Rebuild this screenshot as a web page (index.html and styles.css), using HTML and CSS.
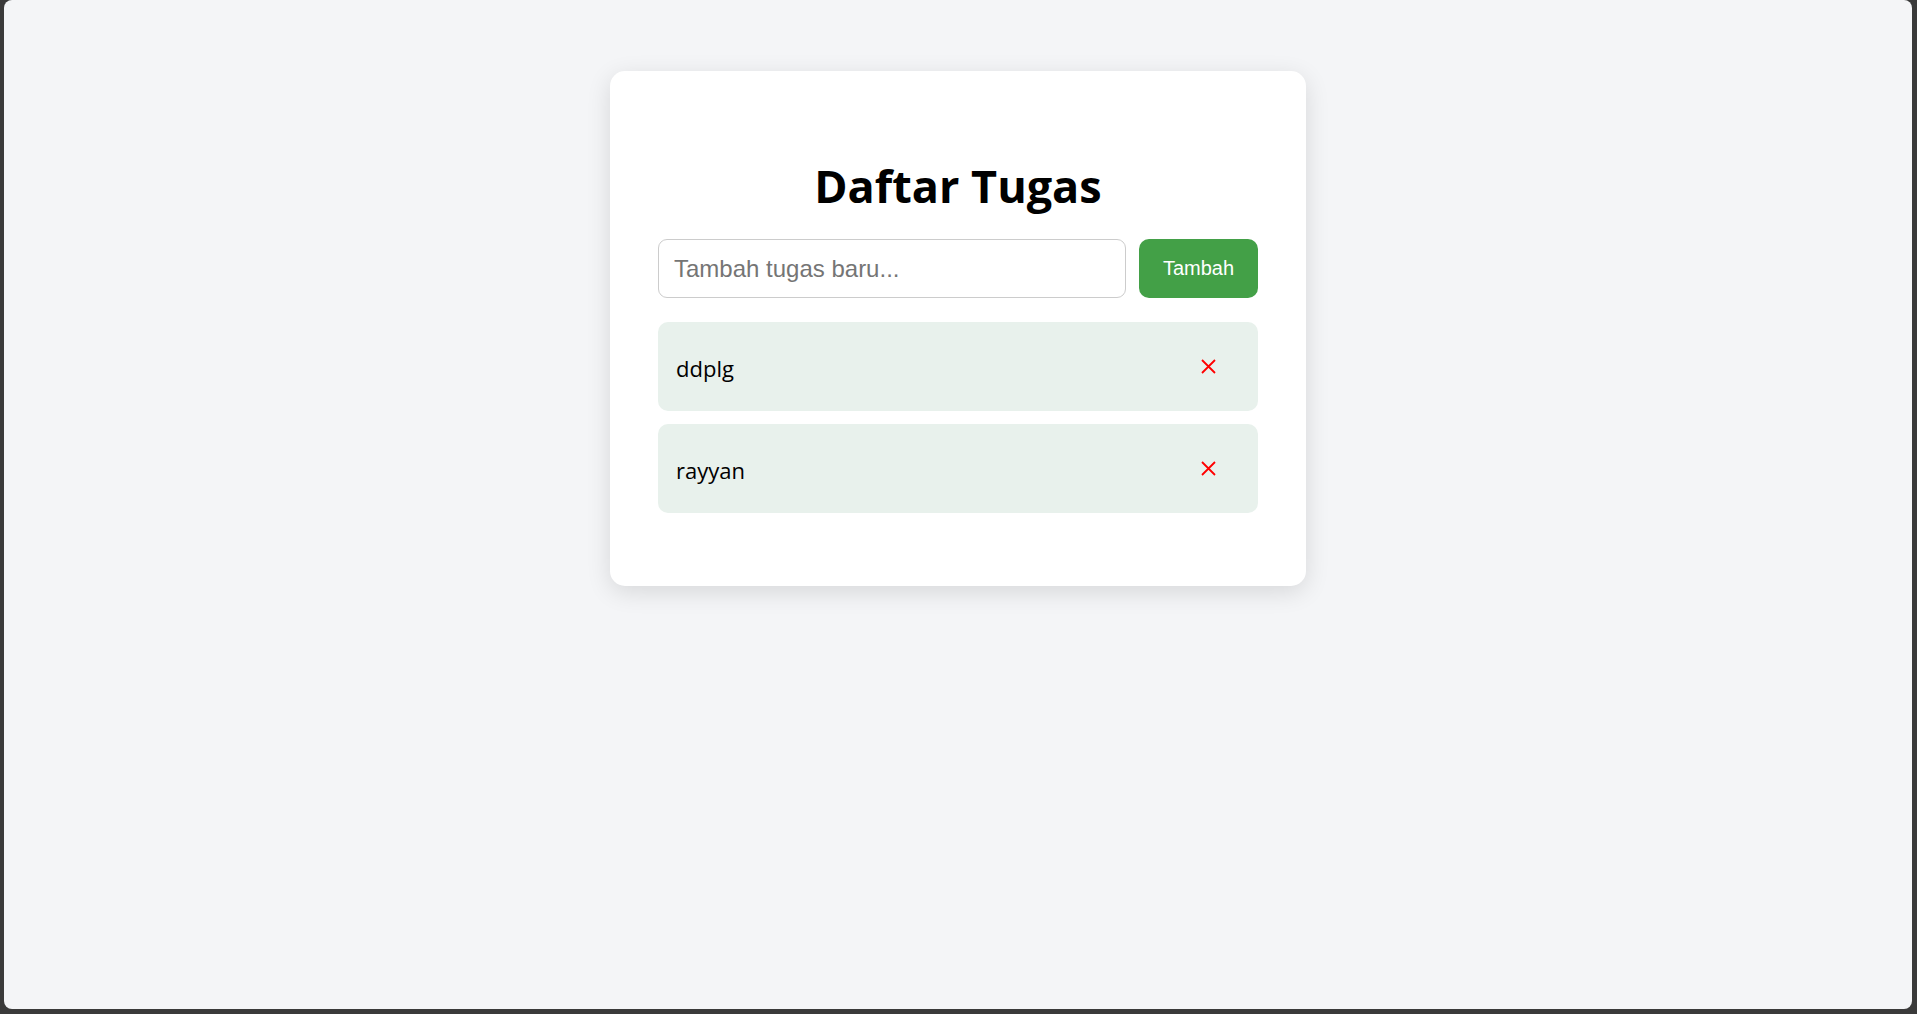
FILE: index.html
```html
<!DOCTYPE html>
<html lang="id">
<head>
<meta charset="utf-8">
<title>Daftar Tugas</title>
<link rel="stylesheet" href="styles.css">
</head>
<body>
<div class="screen">
  <main class="card">
    <h1 class="title">Daftar Tugas</h1>
    <form class="add-form">
      <input class="task-input" type="text" placeholder="Tambah tugas baru...">
      <button class="add-btn" type="button">Tambah</button>
    </form>
    <ul class="task-list">
      <li class="task">
        <span class="task-text">ddplg</span>
        <button class="del-btn" type="button" aria-label="Hapus">
          <svg width="15" height="15" viewBox="0 0 15 15"><path d="M1 1L14 14M14 1L1 14" stroke="#ff0000" stroke-width="1.8" fill="none"/></svg>
        </button>
      </li>
      <li class="task">
        <span class="task-text">rayyan</span>
        <button class="del-btn" type="button" aria-label="Hapus">
          <svg width="15" height="15" viewBox="0 0 15 15"><path d="M1 1L14 14M14 1L1 14" stroke="#ff0000" stroke-width="1.8" fill="none"/></svg>
        </button>
      </li>
    </ul>
  </main>
</div>
</body>
</html>
```

FILE: styles.css
```css
html, body {
  margin: 0;
  padding: 0;
  background: #3a3a3a;
  height: 100%;
}

body {
  font-family: "Open Sans", "Noto Sans", sans-serif;
  color: #000;
}

.screen {
  box-sizing: border-box;
  height: 1009px;
  margin: 0 5px 0 4px;
  background: #f4f5f7;
  border-radius: 8px;
  padding-top: 71px;
  display: flex;
  flex-direction: column;
  align-items: center;
}

.card {
  box-sizing: border-box;
  width: 696px;
  background: #ffffff;
  border-radius: 15px;
  padding: 48px 48px 48px;
  box-shadow: 0 6px 24px rgba(0, 0, 0, 0.12);
}

.title {
  margin: 40px 0 26px;
  font-size: 45px;
  line-height: 54px;
  font-weight: 700;
  text-align: center;
}

.add-form {
  display: flex;
  gap: 13px;
  margin: 0;
}

.task-input {
  flex: 1;
  box-sizing: border-box;
  height: 59px;
  padding: 0 15px;
  border: 1px solid #cccccc;
  border-radius: 9px;
  font-family: "Liberation Sans", Arial, sans-serif;
  font-size: 24px;
  color: #333;
  outline: none;
}

.task-input::placeholder {
  color: #757575;
}

.add-btn {
  box-sizing: border-box;
  width: 119px;
  height: 59px;
  border: none;
  border-radius: 10px;
  background: #43a047;
  color: #ffffff;
  font-family: "Liberation Sans", Arial, sans-serif;
  font-size: 20px;
  padding: 0;
}

.task-list {
  list-style: none;
  margin: 24px 0 25px;
  padding: 0;
  display: flex;
  flex-direction: column;
  gap: 13px;
}

.task {
  box-sizing: border-box;
  height: 89px;
  display: flex;
  align-items: center;
  justify-content: space-between;
  padding: 0 42px 0 18px;
  background: #e8f1ec;
  border-radius: 10px;
}

.task-text {
  font-size: 22px;
  padding-top: 3px;
}

.del-btn {
  display: flex;
  padding: 0;
  border: none;
  background: none;
}
```
